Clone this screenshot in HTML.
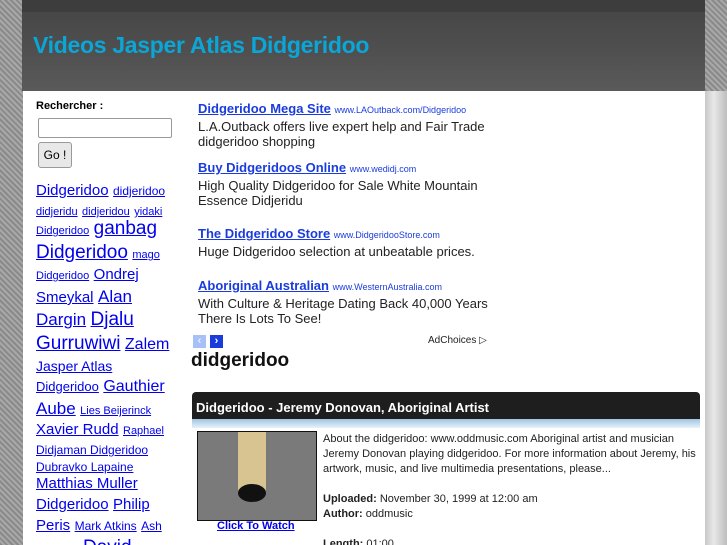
<!DOCTYPE html>
<html style="overflow:hidden;height:545px"><head><meta charset="utf-8"><style>
body{margin:0;width:727px;height:545px;overflow:hidden;font-family:"Liberation Sans",sans-serif;background:repeating-linear-gradient(45deg,#8a8a8a 0 2px,#a8a8a8 2px 4px);position:relative}
.hdr{position:absolute;left:22px;top:0;width:683px;height:91px;background:linear-gradient(#3d3d3d 0,#3d3d3d 12px,#474747 12px,#4f4f4f 50px,#5a5a5a 91px)}
.hdr h1{position:absolute;left:11px;top:32px;margin:0;font-size:23px;color:#0aa6d8;font-weight:bold;letter-spacing:-0.3px}
.right{position:absolute;left:705px;top:91px;width:22px;height:454px;background:linear-gradient(90deg,#c8c8c8,#e8e8e8 40%,#bdbdbd)}
.main{position:absolute;left:23px;top:91px;width:682px;height:454px;background:#fff;overflow:hidden}
a{color:#0000ee;text-decoration:underline}
.a{position:absolute;font-size:13px;color:#222;line-height:15px}
.a .h{display:block;margin-bottom:1px}
.t{font-weight:bold;color:#1a3cdd;font-size:13px}
.u{font-size:9px;color:#1a3cdd;text-decoration:none}
.tc{position:absolute;left:13px;white-space:nowrap}
</style></head><body>
<div class="hdr"><h1>Videos Jasper Atlas Didgeridoo</h1></div>
<div class="right"></div>
<div class="main">
 <div style="position:absolute;left:13px;top:9px;font-size:11px;font-weight:bold">Rechercher :</div>
 <div style="position:absolute;left:15px;top:27px;width:132px;height:18px;border:1px solid #999;border-radius:2px"></div>
 <div style="position:absolute;left:15px;top:51px;width:32px;height:24px;border:1px solid #999;border-radius:3px;background:#e8e8e8;font-size:12px;line-height:24px;text-align:center">Go !</div>
 <div class="tc" style="top:91px"><a style="font-size:15px">Didgeridoo</a> <a style="font-size:12px">didjeridoo</a></div>
 <div class="tc" style="top:111px"><a style="font-size:11px">didjeridu</a> <a style="font-size:11px">didjeridou</a> <a style="font-size:11px">yidaki</a></div>
 <div class="tc" style="top:127px"><a style="font-size:11px">Didgeridoo</a> <a style="font-size:19px">ganbag</a></div>
 <div class="tc" style="top:151px"><a style="font-size:19px">Didgeridoo</a> <a style="font-size:11px">mago</a></div>
 <div class="tc" style="top:175px"><a style="font-size:11px">Didgeridoo</a> <a style="font-size:15px">Ondrej</a></div>
 <div class="tc" style="top:196px"><a style="font-size:15px">Smeykal</a> <a style="font-size:17px">Alan</a></div>
 <div class="tc" style="top:218px"><a style="font-size:17px">Dargin</a> <a style="font-size:19px">Djalu</a></div>
 <div class="tc" style="top:242px"><a style="font-size:19px">Gurruwiwi</a> <a style="font-size:16px">Zalem</a></div>
 <div class="tc" style="top:267px"><a style="font-size:14px">Jasper Atlas</a></div>
 <div class="tc" style="top:287px"><a style="font-size:13px">Didgeridoo</a> <a style="font-size:16px">Gauthier</a></div>
 <div class="tc" style="top:308px"><a style="font-size:17px">Aube</a> <a style="font-size:11px">Lies Beijerinck</a></div>
 <div class="tc" style="top:330px"><a style="font-size:15px">Xavier Rudd</a> <a style="font-size:11px">Raphael</a></div>
 <div class="tc" style="top:350px"><a style="font-size:12px">Didjaman Didgeridoo</a></div>
 <div class="tc" style="top:367px"><a style="font-size:12px">Dubravko Lapaine</a></div>
 <div class="tc" style="top:384px"><a style="font-size:15px">Matthias Muller</a></div>
 <div class="tc" style="top:405px"><a style="font-size:15px">Didgeridoo</a> <a style="font-size:15px">Philip</a></div>
 <div class="tc" style="top:426px"><a style="font-size:15px">Peris</a> <a style="font-size:12px">Mark Atkins</a> <a style="font-size:12px">Ash</a></div>
 <div class="tc" style="top:446px;left:60px"><a style="font-size:19px">David</a></div>

 <div class="a" style="left:175px;top:10px;width:300px"><span class="h"><a class="t">Didgeridoo Mega Site</a> <a class="u">www.LAOutback.com/Didgeridoo</a></span>L.A.Outback offers live expert help and Fair Trade didgeridoo shopping</div>
 <div class="a" style="left:175px;top:69px;width:300px"><span class="h"><a class="t">Buy Didgeridoos Online</a> <a class="u">www.wedidj.com</a></span>High Quality Didgeridoo for Sale White Mountain Essence Didjeridu</div>
 <div class="a" style="left:175px;top:135px;width:300px"><span class="h"><a class="t">The Didgeridoo Store</a> <a class="u">www.DidgeridooStore.com</a></span>Huge Didgeridoo selection at unbeatable prices.</div>
 <div class="a" style="left:175px;top:187px;width:300px"><span class="h"><a class="t">Aboriginal Australian</a> <a class="u">www.WesternAustralia.com</a></span>With Culture &amp; Heritage Dating Back 40,000 Years There Is Lots To See!</div>
 <div style="position:absolute;left:170px;top:244px;width:13px;height:13px;background:#a8c0f8;color:#fff;font-size:11px;line-height:13px;text-align:center">‹</div>
 <div style="position:absolute;left:187px;top:244px;width:13px;height:13px;background:#1a3cdd;color:#fff;font-size:11px;font-weight:bold;line-height:13px;text-align:center">›</div>
 <div style="position:absolute;left:405px;top:244px;font-size:10px;color:#222">AdChoices ▷</div>
 <div style="position:absolute;left:168px;top:259px;font-size:19px;font-weight:bold;color:#111">didgeridoo</div>
 <div style="position:absolute;left:169px;top:301px;width:508px;height:27px;background:#1e1e1e;border-radius:4px 4px 0 0;color:#fff;font-weight:bold;font-size:13px;line-height:31px;padding-left:4px;box-sizing:border-box">Didgeridoo - Jeremy Donovan, Aboriginal Artist</div>
 <div style="position:absolute;left:169px;top:328px;width:508px;height:9px;background:linear-gradient(#9fc4e0,#e8f2fa)"></div>
 <div style="position:absolute;left:174px;top:340px;width:118px;height:88px;background:#7a7a7a;border:1px solid #111"><div style="position:absolute;left:40px;top:0;width:28px;height:70px;background:#d8c490;border-radius:0 0 14px 14px"></div><div style="position:absolute;left:40px;top:52px;width:28px;height:18px;background:#111;border-radius:50%"></div></div>
 <a style="position:absolute;left:194px;top:429px;font-size:11px;font-weight:bold">Click To Watch</a>
 <div style="position:absolute;left:300px;top:341px;width:380px;font-size:11px;line-height:15px;color:#222">About the didgeridoo: www.oddmusic.com Aboriginal artist and musician Jeremy Donovan playing didgeridoo. For more information about Jeremy, his artwork, music, and live multimedia presentations, please...<br><br><b>Uploaded:</b> November 30, 1999 at 12:00 am<br><b>Author:</b> oddmusic<br><br><b>Length:</b> 01:00</div>
</div>
</body></html>
